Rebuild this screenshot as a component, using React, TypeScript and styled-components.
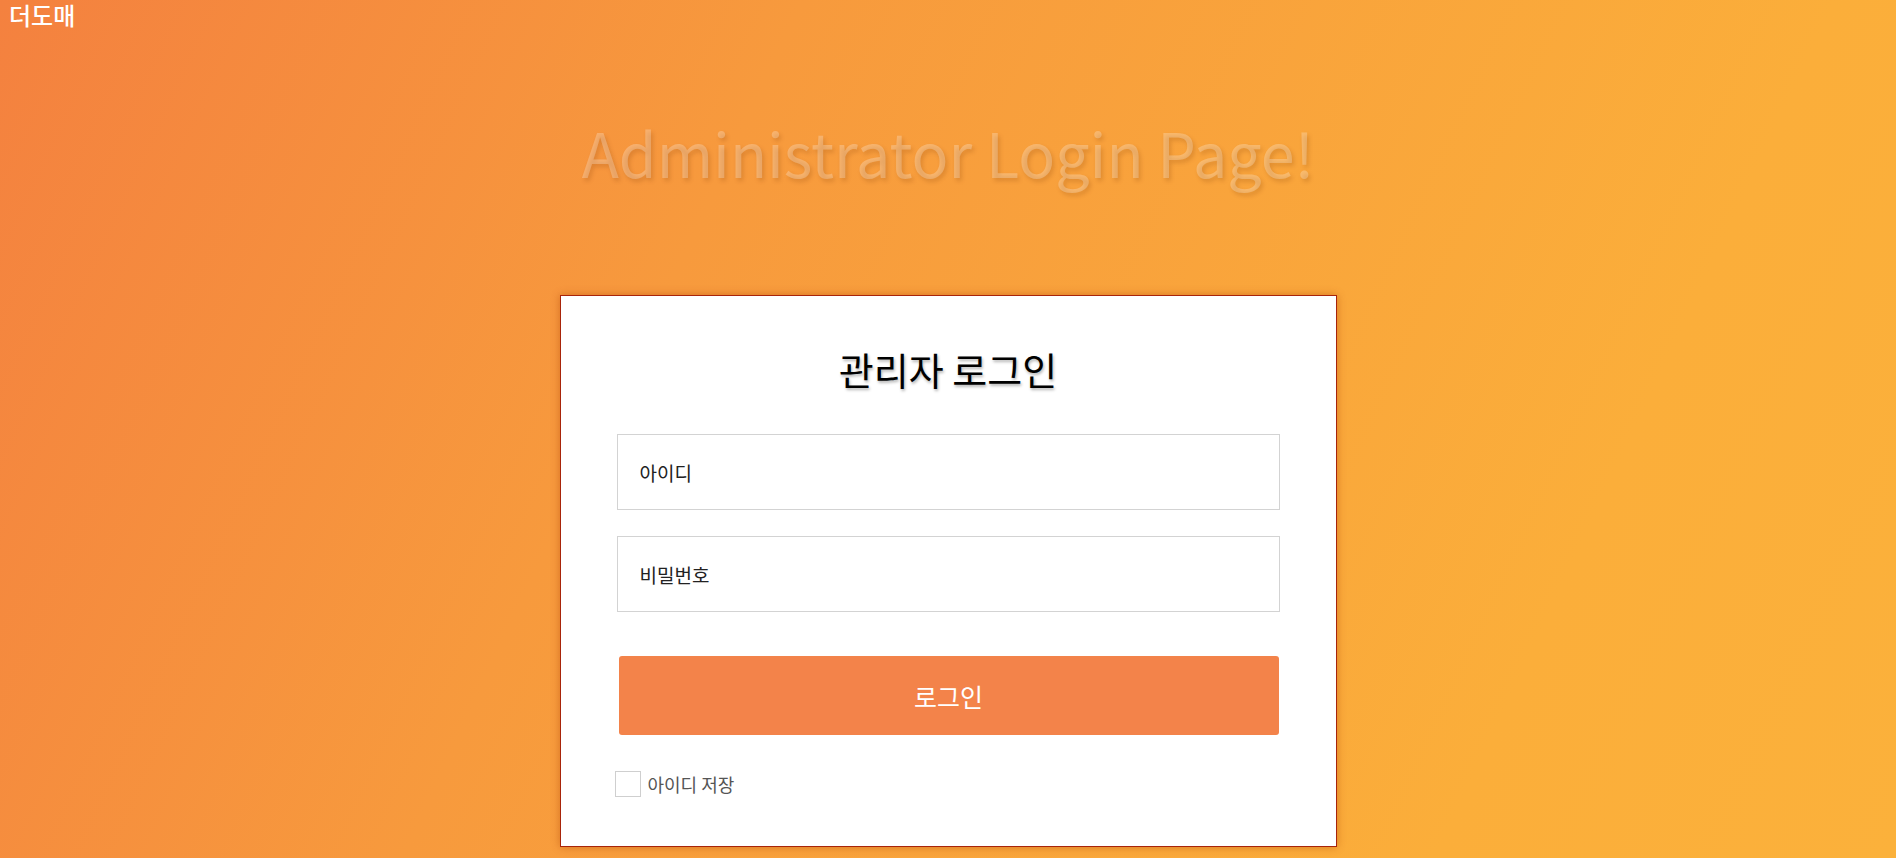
import React, { useState } from 'react';
import styled, { createGlobalStyle } from 'styled-components';

const GlobalStyle = createGlobalStyle`
  html, body {
    margin: 0;
    padding: 0;
    height: 100%;
  }
  body {
    font-family: "Noto Sans CJK KR", "Noto Sans", sans-serif;
    overflow: hidden;
  }
  #root {
    height: 100%;
  }
`;

const Page = styled.div`
  height: 100%;
  background: linear-gradient(115deg, #f4813f 0%, #f79a3d 35%, #fbae3a 80%, #fbb13b 100%);
`;

const Brand = styled.div`
  padding: 0 9px;
  height: 30px;
  line-height: 30px;
  font-size: 24px;
  font-weight: 500;
  color: #fff;
`;

const Headline = styled.h1`
  margin: 91px 0 0;
  font-size: 61px;
  line-height: 1;
  font-weight: 400;
  text-align: center;
  color: rgba(255, 255, 255, 0.25);
  text-shadow: 2px 3px 4px rgba(120, 50, 0, 0.2);
`;

const Card = styled.form`
  box-sizing: border-box;
  width: 777px;
  margin: 113px auto 0;
  padding: 54px 56px 49px;
  background: #fff;
  border: 1px solid #a8240a;
  box-shadow: 0 0 8px rgba(170, 60, 0, 0.45);
  display: flex;
  flex-direction: column;
`;

const Title = styled.h2`
  margin: 0 0 46px;
  font-size: 38px;
  line-height: 1;
  font-weight: 400;
  text-align: center;
  color: #000;
  text-shadow: 1px 2px 3px rgba(0, 0, 0, 0.3);
`;

const Field = styled.input<{ $gap: number }>`
  box-sizing: border-box;
  width: 100%;
  height: 76px;
  margin: 0 0 ${p => p.$gap}px;
  padding: 0 22px;
  border: 1px solid #d3d3d3;
  outline: none;
  font-family: inherit;
  font-size: 19px;
  color: #222;

  &::placeholder {
    color: #222;
    opacity: 1;
  }
`;

const SubmitButton = styled.button`
  box-sizing: border-box;
  height: 79px;
  margin: 0 1px 36px 2px;
  border: none;
  border-radius: 3px;
  background: #f3834a;
  color: #fff;
  font-family: inherit;
  font-size: 25px;
  cursor: pointer;
`;

const RememberRow = styled.label`
  display: flex;
  align-items: center;
  gap: 7px;
  margin-left: -2px;
  font-size: 18px;
  color: #555;
  cursor: pointer;
`;

const Check = styled.input`
  appearance: none;
  box-sizing: border-box;
  width: 26px;
  height: 26px;
  margin: 0;
  border: 1px solid #cfcfcf;
  background: #fff;

  &:checked {
    background: #f3834a;
    border-color: #f3834a;
  }
`;

const App: React.FC = () => {
  const [id, setId] = useState('');
  const [pw, setPw] = useState('');
  const [remember, setRemember] = useState(false);

  return (
    <Page>
      <GlobalStyle />
      <Brand>더도매</Brand>
      <Headline>Administrator Login Page!</Headline>
      <Card onSubmit={e => e.preventDefault()}>
        <Title>관리자 로그인</Title>
        <Field $gap={26} type="text" placeholder="아이디" value={id} onChange={e => setId(e.target.value)} />
        <Field $gap={44} type="password" placeholder="비밀번호" value={pw} onChange={e => setPw(e.target.value)} />
        <SubmitButton type="submit">로그인</SubmitButton>
        <RememberRow>
          <Check type="checkbox" checked={remember} onChange={e => setRemember(e.target.checked)} />
          아이디 저장
        </RememberRow>
      </Card>
    </Page>
  );
};

export default App;
